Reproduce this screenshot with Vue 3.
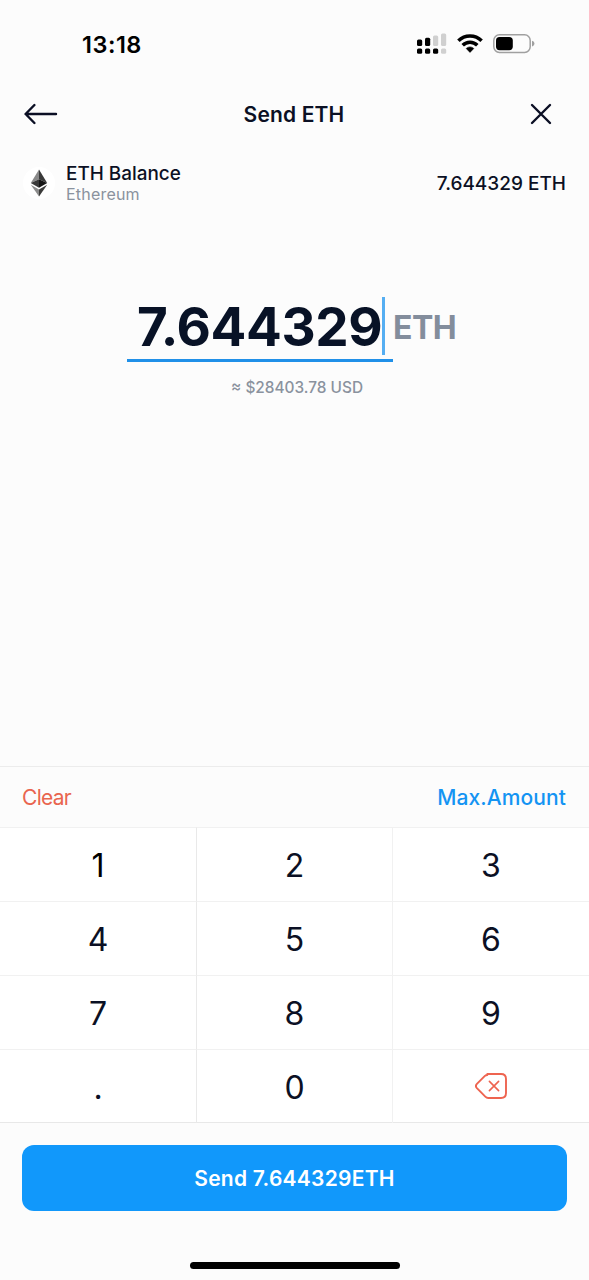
<script setup>
const keys = ['1', '2', '3', '4', '5', '6', '7', '8', '9', '.', '0', 'del']
</script>

<template>
  <main class="screen">
    <div class="status">
      <span class="time">13:18</span>
      <div class="indicators">
        <svg class="signal" width="30" height="22" viewBox="0 0 30 22">
          <g fill="#000">
            <rect x="0" y="6.5" width="5.2" height="6.4" rx="1.5" />
            <rect x="8" y="4.7" width="5.2" height="8.2" rx="1.5" />
            <rect x="0" y="15.4" width="5.2" height="5.4" rx="1.5" />
            <rect x="8" y="15.4" width="5.2" height="5.4" rx="1.5" />
            <rect x="16" y="15.4" width="5.2" height="5.4" rx="1.5" />
          </g>
          <g fill="#d0d0d0">
            <rect x="16" y="2.5" width="5.2" height="10.4" rx="1.5" />
            <rect x="24" y=".5" width="5.2" height="12.4" rx="1.5" />
            <rect x="24" y="15.4" width="5.2" height="5.4" rx="1.5" />
          </g>
        </svg>
        <svg class="wifi" width="26" height="20" viewBox="0 0 26 20">
          <g fill="none" stroke="#000" stroke-width="3.5">
            <path d="M1.4 6.8a16.4 16.4 0 0 1 23.2 0" />
            <path d="M5.7 11.3a10.3 10.3 0 0 1 14.6 0" />
          </g>
          <path d="M13 18.4l-3.8-3.9a5.4 5.4 0 0 1 7.6 0z" fill="#000" stroke="#000" stroke-width=".6" stroke-linejoin="round" />
        </svg>
        <svg class="battery" width="42" height="20" viewBox="0 0 42 20">
          <rect x=".8" y=".8" width="36.4" height="17.6" rx="5.6" fill="none" stroke="#a0a0a0" stroke-width="1.5" />
          <rect x="3" y="3" width="16.8" height="13.2" rx="3.6" fill="#000" />
          <path d="M39 6.8c3.2.6 3.2 5 0 5.6z" fill="#a0a0a0" />
        </svg>
      </div>
    </div>

    <header class="nav">
      <svg width="34" height="22" viewBox="0 0 34 22" fill="none" stroke="#0b0f24" stroke-width="2.4" stroke-linecap="round" stroke-linejoin="round">
        <path d="M32 11H1.6M10.4 2L1.6 11l8.8 9" />
      </svg>
      <h1>Send ETH</h1>
      <svg width="22" height="22" viewBox="0 0 22 22" fill="none" stroke="#0b0f24" stroke-width="2.4" stroke-linecap="round">
        <path d="M2 2l18 18M20 2L2 20" />
      </svg>
    </header>

    <section class="balance">
      <div class="coin">
        <svg width="18" height="28" viewBox="0 0 18 28">
          <path d="M9 .5L.8 14 9 10.3z" fill="#898989" />
          <path d="M9 .5L17.2 14 9 10.3z" fill="#3a3a3a" />
          <path d="M9 10.3L.8 14 9 18.8z" fill="#393939" />
          <path d="M9 10.3l8.2 3.7L9 18.8z" fill="#151515" />
          <path d="M.8 15.7L9 20.5v7z" fill="#8c8c8c" />
          <path d="M17.2 15.7L9 20.5v7z" fill="#3c3c3b" />
        </svg>
      </div>
      <div class="names">
        <span class="name">ETH Balance</span>
        <span class="network">Ethereum</span>
      </div>
      <span class="value">7.644329 ETH</span>
    </section>

    <section class="entry">
      <div class="amount">
        <div class="field"><span class="digits">7.644329</span><i class="caret"></i></div>
        <span class="unit">ETH</span>
      </div>
      <p class="fiat">≈ $28403.78 USD</p>
    </section>

    <div class="tools">
      <span class="clear">Clear</span>
      <span class="max">Max.Amount</span>
    </div>
    <div class="keypad">
      <div v-for="k in keys" :key="k" class="key">
        <svg v-if="k === 'del'" width="32" height="26" viewBox="0 0 32 26" fill="none" stroke="#ee6450" stroke-width="1.9" stroke-linecap="round" stroke-linejoin="round">
          <path d="M12.3 1H26c3.2 0 5 1.8 5 5v14c0 3.2-1.8 5-5 5H13.2c-1.3 0-2-.4-2.9-1.3l-8.4-8.6c-1.3-1.4-1.3-2.8 0-4.2l8-8c.7-.6 1.4-.9 2.4-.9z" />
          <path d="M14.4 8.4l9.2 9.2M23.6 8.4l-9.2 9.2" stroke-width="1.6" />
        </svg>
        <span v-else>{{ k }}</span>
      </div>
    </div>
    <footer class="footer">
      <button class="send">Send 7.644329ETH</button>
      <div class="home"></div>
    </footer>
  </main>
</template>

<style>
body { margin: 0; background: #fcfcfc; }
</style>

<style scoped>
* { box-sizing: border-box; }
.screen {
  width: 100%;
  height: 1280px;
  overflow: hidden;
  display: flex;
  flex-direction: column;
  background: #fcfcfc;
  color: #0b1024;
  font-family: Inter, "Liberation Sans", sans-serif;
  white-space: nowrap;
}
.status {
  height: 88px;
  flex: none;
  display: flex;
  align-items: center;
  justify-content: space-between;
  padding: 0 54px 0 82px;
}
.time { color: #000; font-size: 23.5px; font-weight: 600; letter-spacing: .5px; }
.indicators { display: flex; align-items: center; }
.signal { margin-right: 10px; }
.wifi { margin-right: 10px; }
.nav {
  height: 52px;
  flex: none;
  display: flex;
  align-items: center;
  justify-content: space-between;
  padding: 0 37px 0 24px;
}
.nav h1 { margin: 0; font-size: 21px; font-weight: 600; letter-spacing: .15px; }
.balance {
  height: 86px;
  flex: none;
  display: flex;
  align-items: center;
  padding: 0 23px;
}
.coin {
  width: 32px;
  height: 32px;
  border-radius: 50%;
  background: #fff;
  display: flex;
  align-items: center;
  justify-content: center;
}
.names { display: flex; flex-direction: column; margin: 2px 0 0 11px; line-height: 21px; }
.name { font-size: 18.9px; font-weight: 500; }
.network { font-size: 16px; letter-spacing: .2px; color: #8a929e; }
.value { margin-left: auto; font-size: 19px; font-weight: 500; }
.entry {
  height: 540px;
  flex: none;
  display: flex;
  flex-direction: column;
  align-items: flex-start;
  padding: 70px 0 0 127px;
}
.amount { display: flex; align-items: flex-start; }
.field {
  width: 266px;
  height: 66px;
  border-bottom: 3px solid #2090e8;
  display: flex;
  padding-left: 10px;
}
.digits { font-size: 53px; line-height: 63px; font-weight: 700; width: 245px; color: #081226; letter-spacing: -.4px; }
.caret { width: 3px; height: 58px; margin-top: 1px; background: #55aef2; }
.unit { font-size: 32px; line-height: 64px; font-weight: 700; letter-spacing: -.5px; color: #838d9c; }
.fiat { margin: 14px 0 0 104px; font-size: 15.4px; line-height: 23px; font-weight: 500; color: #8a929e; }
.tools {
  height: 61px;
  flex: none;
  display: flex;
  align-items: center;
  justify-content: space-between;
  padding: 0 23px 0 22px;
  border-top: 1px solid #ececec;
  font-size: 21px;
}
.clear { color: #e9654f; letter-spacing: -.7px; }
.max { color: #1494f3; font-weight: 500; letter-spacing: .1px; }
.keypad {
  flex: none;
  display: grid;
  grid-template-columns: 197px 196px 196px;
  grid-auto-rows: 74px;
  background: #fff;
  border-bottom: 1px solid #e8e8e8;
  height: 296px;
}
.key {
  display: flex;
  align-items: center;
  justify-content: center;
  border-top: 1px solid #f1f1f1;
  border-right: 1px solid #f1f1f1;
  font-size: 32px;
}
.key span { padding-top: 2px; }
.key svg { margin-top: -1px; }
.key:nth-child(3n) { border-right: 0; }
.key:nth-child(3n + 1) { border-right-color: #e9e9e9; }
.key:nth-child(1) { color: #000; }
.footer {
  flex: 1;
  display: flex;
  flex-direction: column;
  align-items: center;
  padding: 22px 22px 0;
}
.send {
  width: 545px;
  height: 66px;
  border: 0;
  border-radius: 12px;
  background: #1198fb;
  color: #fff;
  font: 600 21px Inter, "Liberation Sans", sans-serif;
  letter-spacing: .25px;
}
.home { width: 210px; height: 7px; margin-top: 51px; border-radius: 4px; background: #000; }
</style>
